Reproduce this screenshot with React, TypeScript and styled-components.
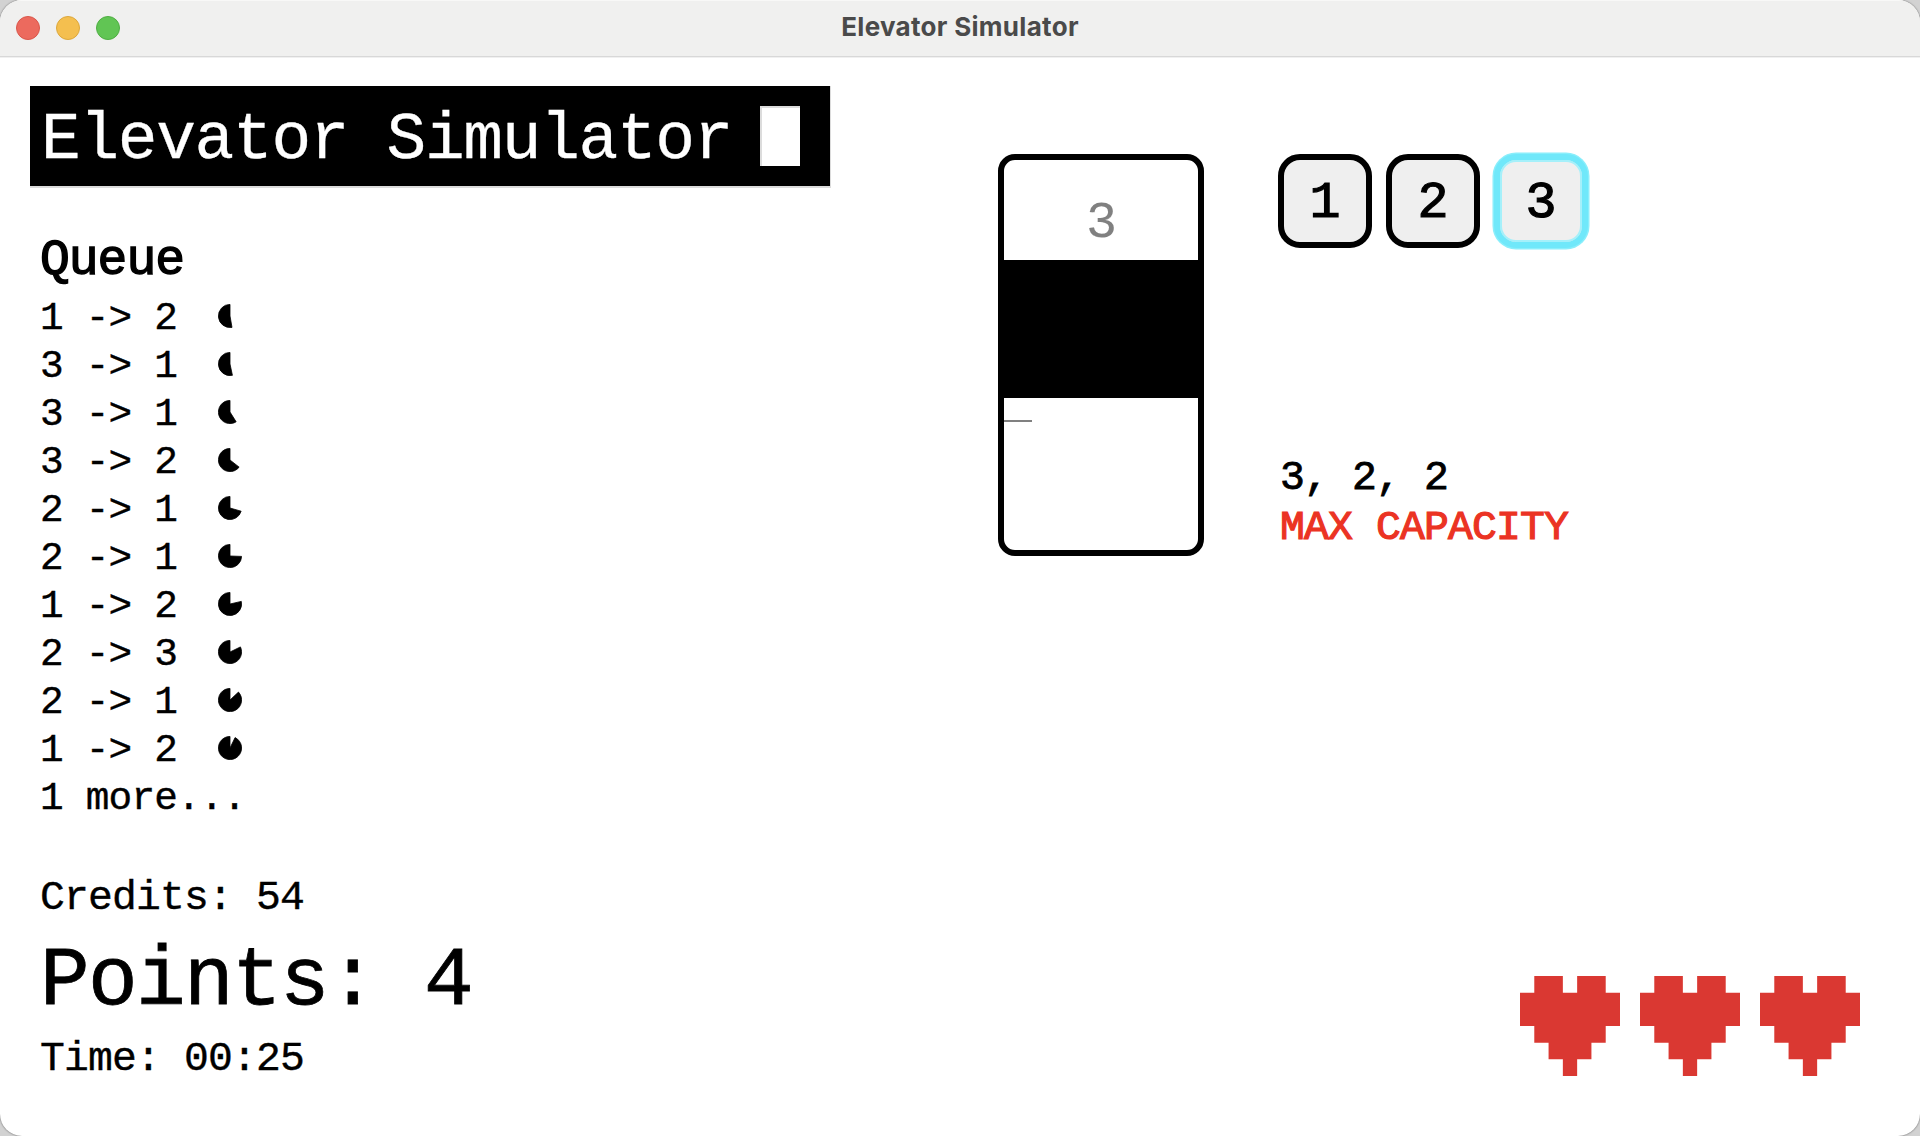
import React from "react";
import styled, { createGlobalStyle } from "styled-components";

const Global = createGlobalStyle`
  *, *::before, *::after { box-sizing: border-box; }
  html, body { margin: 0; padding: 0; background: #d2d2d2; }
`;

const Window = styled.div`
  width: 1920px;
  height: 1136px;
  display: flex;
  flex-direction: column;
  background: #fff;
  border-radius: 22px;
  overflow: hidden;
  box-shadow: 0 0 2px rgba(0, 0, 0, 0.6);
`;

const TitleBar = styled.header`
  flex: none;
  height: 58px;
  display: grid;
  grid-template-columns: 1fr auto 1fr;
  align-items: center;
  padding: 0 16px 2px;
  background: #f0f0ef;
  border-top: 1px solid #f8f8f7;
  border-bottom: 1px solid #f0f0f0;
  box-shadow: inset 0 -1px 0 #d8d8d8;
`;

const Lights = styled.div`
  display: flex;
  gap: 16px;
`;

const Light = styled.span<{ $fill: string; $edge: string }>`
  width: 24px;
  height: 24px;
  border-radius: 50%;
  background: ${(p) => p.$fill};
  border: 1px solid ${(p) => p.$edge};
`;

const WindowTitle = styled.h1`
  margin: 0;
  padding-bottom: 3px;
  font: 700 26px/32px Inter, "Liberation Sans", sans-serif;
  letter-spacing: 0.3px;
  color: #4a4a4a;
`;

const MONO = `"Liberation Mono", "DejaVu Sans Mono", monospace`;

/* Monospaced text: the pitch is 0.6 of $size, the glyphs slightly taller. */
const Mono = styled.div<{ $size: number; $height: number; $stroke?: number; $color?: string }>`
  font-family: ${MONO};
  font-size: ${(p) => p.$size * 1.035}px;
  letter-spacing: ${(p) => -p.$size * 0.0211}px;
  line-height: ${(p) => p.$height}px;
  height: ${(p) => p.$height}px;
  color: ${(p) => p.$color ?? "#000"};
  -webkit-text-stroke: ${(p) => p.$stroke ?? 0.4}px ${(p) => p.$color ?? "#000"};
  white-space: pre;
`;

const Main = styled.main`
  flex: 1;
  display: flex;
  padding: 28px 60px 0 30px;
`;

const Left = styled.section`
  width: 968px;
  flex: none;
`;

const Banner = styled.div`
  width: 801px;
  height: 102px;
  display: flex;
  align-items: flex-start;
  gap: 28px;
  padding: 5px 0 0 11px;
  background: #000;
  border-right: 1px solid #dcdcdc;
  border-bottom: 2px solid #dcdcdc;
`;

const Caret = styled.span`
  width: 40px;
  height: 60px;
  margin-top: 15px;
  background: #fff;
  border-top: 2px solid #dcdcdc;
  border-left: 2px solid #dcdcdc;
`;

const Info = styled.div`
  padding: 43px 0 0 10px;
`;

const QueueList = styled.div`
  padding-top: 4px;
`;

const QueueRow = styled.div`
  display: flex;
  align-items: flex-start;
  height: 48px;
`;

const Trip = styled(Mono)`
  width: 178px;
`;

const PieSvg = styled.svg`
  display: block;
  width: 24px;
  height: 24px;
  margin-top: 9px;
`;

const Stats = styled.div`
  padding-top: 51px;
`;

const Points = styled(Mono)`
  margin: 12px 0 5px;
`;

const Right = styled.section`
  flex: 1;
  display: flex;
  flex-direction: column;
  justify-content: space-between;
  padding: 68px 0 60px;
`;

const Play = styled.div`
  display: flex;
  gap: 74px;
`;

const Shaft = styled.div`
  width: 206px;
  height: 402px;
  border: 6px solid #000;
  border-radius: 17px;
  overflow: hidden;
`;

const Floor = styled(Mono)`
  padding-top: 34px;
  height: 100px;
  text-align: center;
`;

const Car = styled.div`
  height: 138px;
  background: #000;
`;

const Marker = styled.div`
  width: 28px;
  height: 2px;
  margin-top: 22px;
  background: #808080;
`;

const Panel = styled.div`
  height: 402px;
  display: flex;
  flex-direction: column;
  justify-content: space-between;
`;

const Buttons = styled.div`
  display: flex;
  gap: 14px;
`;

const FloorButton = styled.button<{ $active?: boolean }>`
  width: 94px;
  height: 94px;
  padding: 9px 1px 0 0;
  display: flex;
  justify-content: center;
  align-items: flex-start;
  background: #efefef;
  border: 6px solid ${(p) => (p.$active ? "#70e8fa" : "#000")};
  border-radius: 22px;
  box-shadow: ${(p) => (p.$active ? "0 0 0 1.5px #8aeefb, inset 0 0 0 2px #a5f0fa" : "none")};
`;

const Riders = styled.div`
  padding: 0 0 3px 2px;
`;

const Lives = styled.div`
  display: flex;
  justify-content: flex-end;
  gap: 20px;
`;

const HeartSvg = styled.svg`
  display: block;
  width: 100px;
  height: 100px;
`;

const Heart = () => (
  <HeartSvg viewBox="0 0 7 6" preserveAspectRatio="none" aria-label="life">
    <path
      fill="#da3832"
      d="M1 0H3V1H4V0H6V1H7V3H6V4H5V5H4V6H3V5H2V4H1V3H0V1H1Z"
    />
  </HeartSvg>
);

/* Remaining-patience pie: the wedge from twelve o'clock to `angle` is gone. */
const Pie = ({ angle }: { angle: number }) => {
  const r = 11.6;
  const a = (angle * Math.PI) / 180;
  const x = 12 + r * Math.sin(a);
  const y = 12 - r * Math.cos(a);
  return (
    <PieSvg viewBox="0 0 24 24">
      <path
        d={`M12 12L${x} ${y}A${r} ${r} 0 ${angle < 180 ? 1 : 0} 1 12 ${12 - r}Z`}
        stroke="#000"
        strokeWidth={0.8}
      />
    </PieSvg>
  );
};

const queue = [
  { from: 1, to: 2, angle: 170 },
  { from: 3, to: 1, angle: 168 },
  { from: 3, to: 1, angle: 148 },
  { from: 3, to: 2, angle: 128 },
  { from: 2, to: 1, angle: 106 },
  { from: 2, to: 1, angle: 92 },
  { from: 1, to: 2, angle: 77 },
  { from: 2, to: 3, angle: 64 },
  { from: 2, to: 1, angle: 47 },
  { from: 1, to: 2, angle: 26 },
];

export default function App() {
  return (
    <>
      <Global />
      <Window>
        <TitleBar>
          <Lights>
            <Light $fill="#ec6a5e" $edge="#d9574b" />
            <Light $fill="#f4bf4f" $edge="#dca73c" />
            <Light $fill="#61c554" $edge="#4fae43" />
          </Lights>
          <WindowTitle>Elevator Simulator</WindowTitle>
        </TitleBar>
        <Main>
          <Left>
            <Banner>
              <Mono $size={64} $height={100} $color="#fff" $stroke={0.3}>
                Elevator Simulator
              </Mono>
              <Caret />
            </Banner>
            <Info>
              <Mono $size={48} $height={60} $stroke={1.4}>Queue</Mono>
              <QueueList>
                {queue.map((q, i) => (
                  <QueueRow key={i}>
                    <Trip $size={38.1} $height={48}>{`${q.from} -> ${q.to}`}</Trip>
                    <Pie angle={q.angle} />
                  </QueueRow>
                ))}
                <Mono $size={38.1} $height={48}>1 more...</Mono>
              </QueueList>
              <Stats>
                <Mono $size={40} $height={48}>Credits: 54</Mono>
                <Points $size={80} $height={96} $stroke={0.8}>Points: 4</Points>
                <Mono $size={40} $height={48}>Time: 00:25</Mono>
              </Stats>
            </Info>
          </Left>
          <Right>
            <Play>
              <Shaft>
                <Floor $size={50} $height={60} $color="#808080" $stroke={0.1}>3</Floor>
                <Car />
                <Marker />
              </Shaft>
              <Panel>
                <Buttons>
                  {[1, 2, 3].map((n) => (
                    <FloorButton key={n} $active={n === 3}>
                      <Mono as="span" $size={50} $height={70} $stroke={1.2}>{n}</Mono>
                    </FloorButton>
                  ))}
                </Buttons>
                <Riders>
                  <Mono $size={40} $height={50} $stroke={0.8}>3, 2, 2</Mono>
                  <Mono $size={40} $height={50} $stroke={1.2} $color="#eb3323">MAX CAPACITY</Mono>
                </Riders>
              </Panel>
            </Play>
            <Lives>
              <Heart />
              <Heart />
              <Heart />
            </Lives>
          </Right>
        </Main>
      </Window>
    </>
  );
}
